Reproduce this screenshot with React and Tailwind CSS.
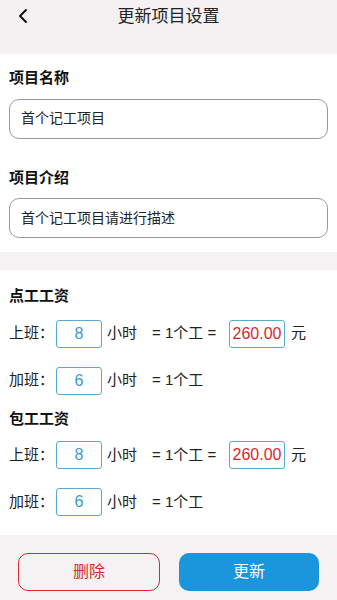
import React from 'react';

const font = { fontFamily: '"Liberation Sans", "Noto Sans CJK SC", sans-serif' };

function NumBox({ value, wide = false }) {
  return (
    <div
      className={`flex h-[28px] items-center justify-center rounded-[3px] border border-[#5aa9cf] text-[16px] ${
        wide ? 'w-[56px] text-[#d8282f]' : 'w-[46px] text-[#3a9ad0]'
      }`}
    >
      {value}
    </div>
  );
}

function WageRow({ label, hours, amount }) {
  return (
    <div className="flex h-[28px] items-center text-[15px] text-[#222]">
      <span className="w-[47px]">{label}：</span>
      <NumBox value={hours} />
      <span className="ml-[5px] w-[45px]">小时</span>
      <span className="w-[77px]">= 1个工{amount ? ' =' : ''}</span>
      {amount && (
        <>
          <NumBox value={amount} wide />
          <span className="ml-[6px]">元</span>
        </>
      )}
    </div>
  );
}

export default function App() {
  return (
    <div className="flex h-[600px] w-[337px] flex-col bg-[#f4f2f2]" style={font}>
      {/* Header */}
      <div className="relative flex h-[54px] shrink-0 items-start justify-center bg-[#f5f1f2] pt-[4px]">
        <svg className="absolute left-[17px] top-[8px]" width="12" height="16" viewBox="0 0 12 16" fill="none">
          <path d="M9 2 L3 8 L9 14" stroke="#111" strokeWidth="2" strokeLinecap="round" strokeLinejoin="round" />
        </svg>
        <h1 className="text-[17px] font-normal text-[#222]">更新项目设置</h1>
      </div>

      {/* Name / description */}
      <div className="flex shrink-0 flex-col bg-white px-[9px] pb-[14px] pt-[13px]">
        <div className="text-[15px] font-bold text-[#111]">项目名称</div>
        <div className="mt-[9px] flex h-[40px] items-center rounded-[10px] border border-[#999] px-[11px] text-[14px] text-[#222]">
          首个记工项目
        </div>
        <div className="mt-[28px] text-[15px] font-bold text-[#111]">项目介绍</div>
        <div className="mt-[9px] flex h-[40px] items-center rounded-[10px] border border-[#999] px-[11px] text-[14px] text-[#222]">
          首个记工项目请进行描述
        </div>
      </div>

      <div className="h-[18px] shrink-0 bg-[#f4f2f2]" />

      {/* Wages */}
      <div className="flex shrink-0 flex-col bg-white px-[9px] pb-[19px] pt-[15px]">
        <div className="text-[15px] font-bold text-[#111]">点工工资</div>
        <div className="mt-[12px] flex flex-col gap-[19px]">
          <WageRow label="上班" hours="8" amount="260.00" />
          <WageRow label="加班" hours="6" />
        </div>
        <div className="mt-[13px] text-[15px] font-bold text-[#111]">包工工资</div>
        <div className="mt-[11px] flex flex-col gap-[19px]">
          <WageRow label="上班" hours="8" amount="260.00" />
          <WageRow label="加班" hours="6" />
        </div>
      </div>

      {/* Footer buttons */}
      <div className="flex flex-1 items-start gap-[19px] bg-[#f4f2f2] px-[18px] pt-[18px]">
        <button className="flex h-[38px] flex-1 items-center justify-center rounded-[10px] border border-[#d8282f] text-[16px] text-[#d8282f]">
          删除
        </button>
        <button className="flex h-[38px] flex-1 items-center justify-center rounded-[10px] bg-[#1b96dc] text-[16px] text-white">
          更新
        </button>
      </div>
    </div>
  );
}
